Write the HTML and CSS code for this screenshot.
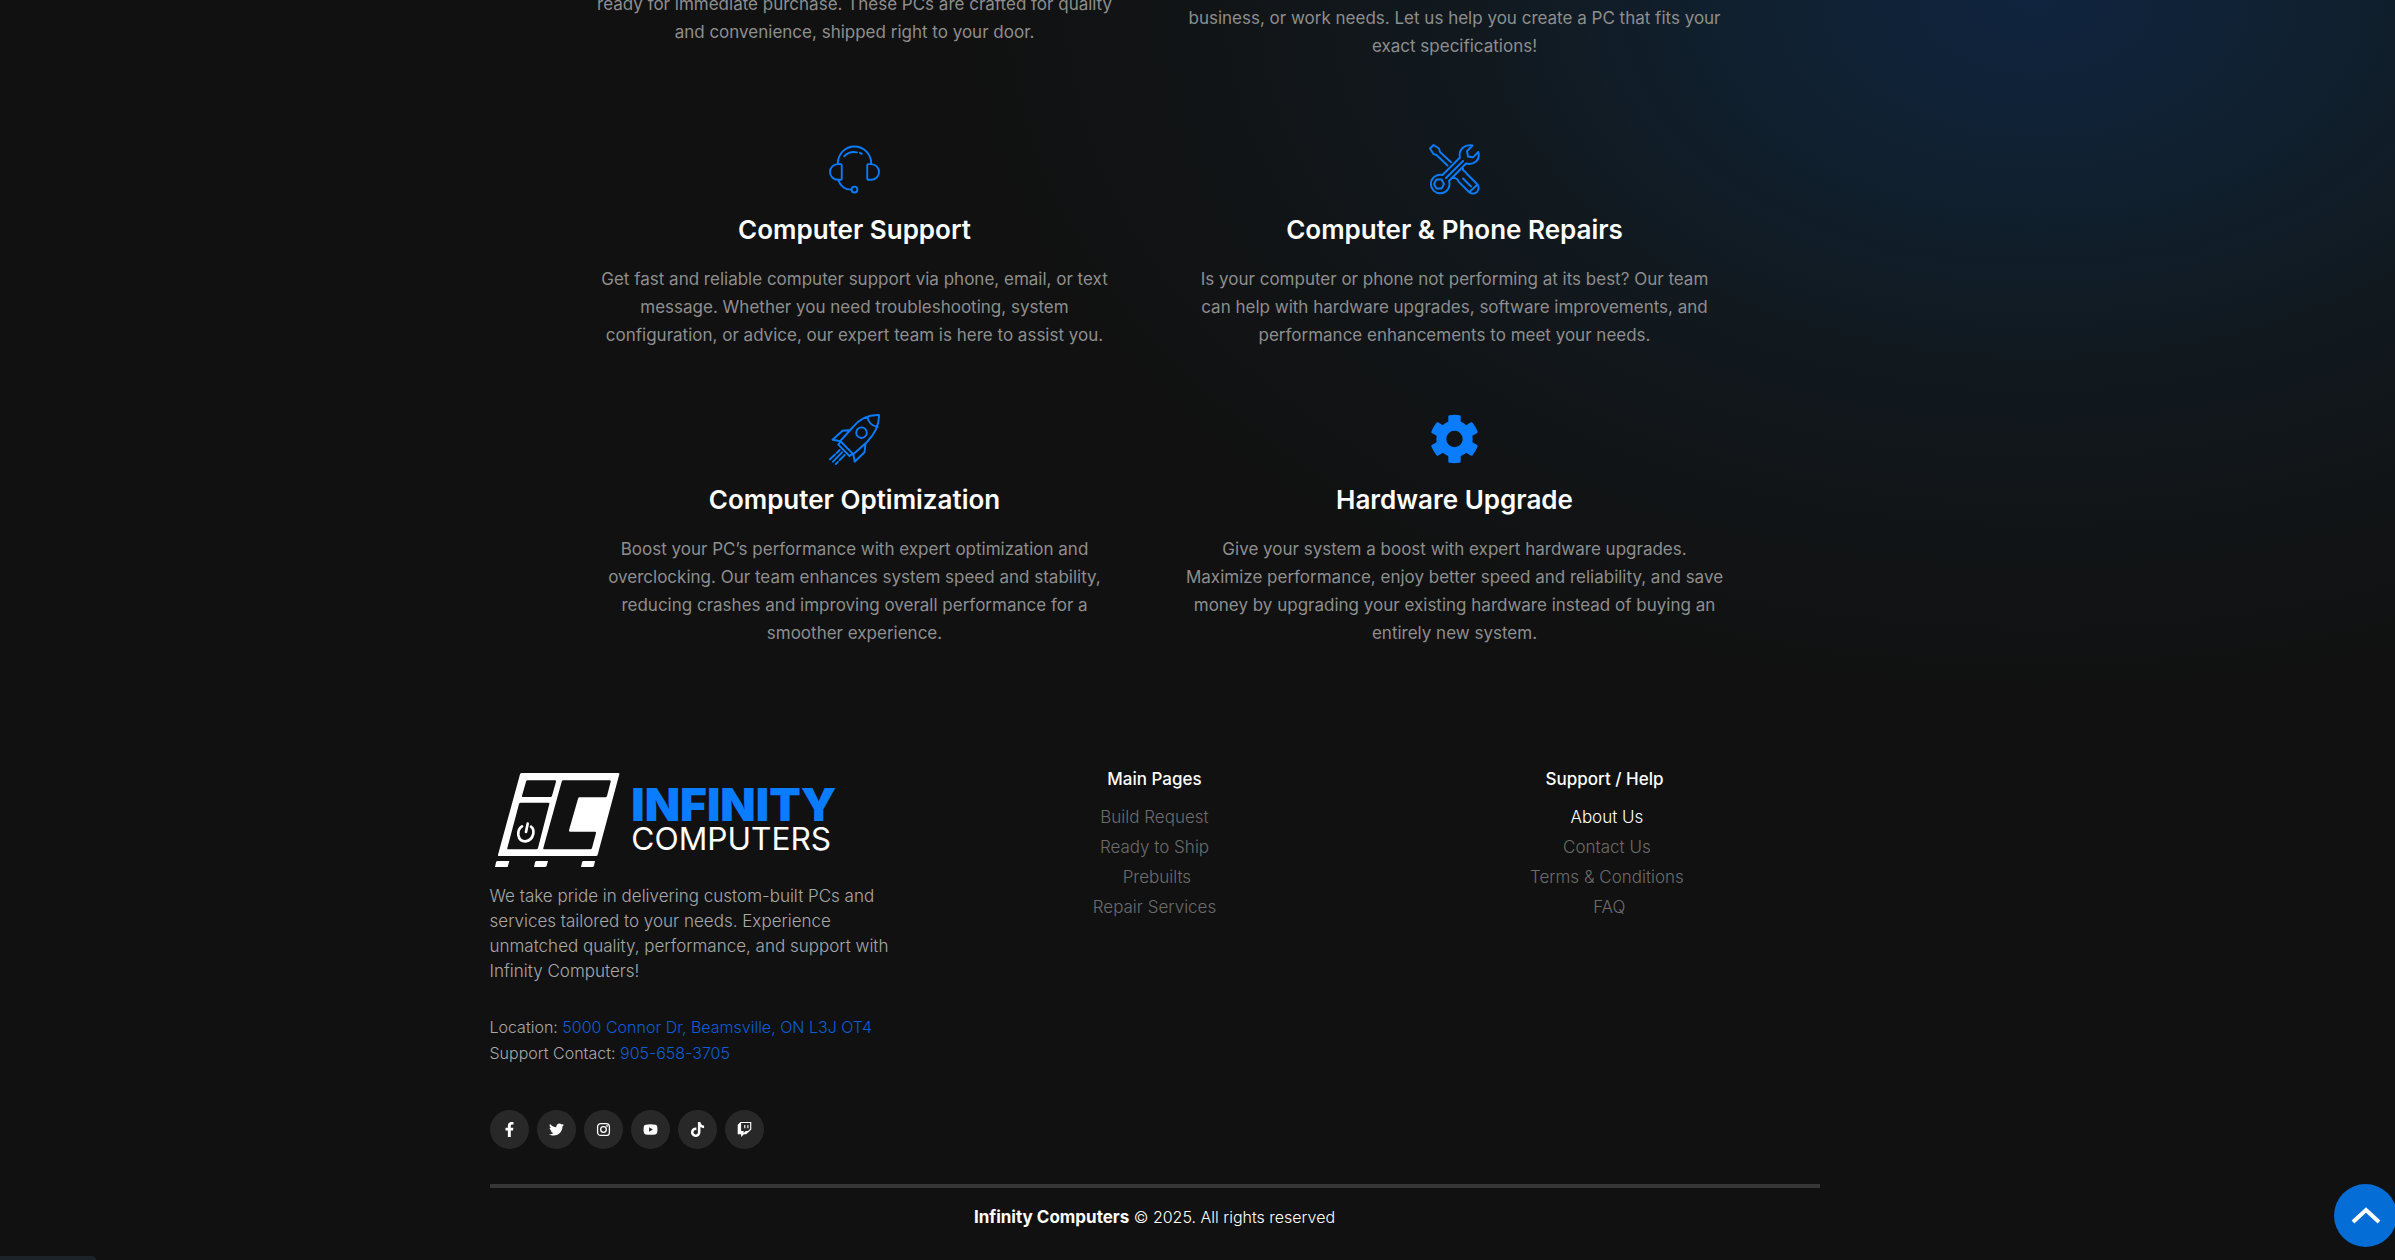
FILE: index.html
```html
<!DOCTYPE html>
<html lang="en">
<head>
<meta charset="utf-8">
<meta name="viewport" content="width=device-width, initial-scale=1">
<title>Infinity Computers</title>
<link rel="stylesheet" href="styles.css">
</head>
<body>
<main class="services">
  <div class="intro-row">
    <p class="text text-raised">ready for immediate purchase. These PCs are crafted for quality<br>and convenience, shipped right to your door.</p>
    <p class="text">business, or work needs. Let us help you create a PC that fits your<br>exact specifications!</p>
  </div>
  <div class="grid">
    <article class="card">
      <svg class="icon" viewBox="0 0 52 51" aria-hidden="true"><path d="M9 20v-1a17 17 0 0 1 34 0v1M15.500 12q5-5.500 13-4M31.500 8.500l2 1M13 21v14q0 1-1 1H9a8 8 0 0 1 0-16h3q1 0 1 1zM39 21v14q0 1 1 1h3a8 8 0 0 0 0-16h-3q-1 0-1 1zM9.500 36.500Q13.500 46 22.500 46"/><ellipse cx="26" cy="46" rx="3" ry="3"/></svg>
      <h3 class="title">Computer Support</h3>
      <p class="text">Get fast and reliable computer support via phone, email, or text<br>message. Whether you need troubleshooting, system<br>configuration, or advice, our expert team is here to assist you.</p>
    </article>
    <article class="card">
      <svg class="icon" viewBox="0 0 51 51" aria-hidden="true"><path d="M18.500 21.500 7.500 11 4.500 10 1 4.500 4.500 1 10 4.500 11 8 22 18.300M13.500 31 31 13.500Q29.500 8 33.500 4 38 .2 43.500 1.500L38 7l1 5.500 5 .8 5.300-5.300Q51 14 47 17.500 43 21 37 19.500L20 37A9.300 9.300 0 1 1 13.500 31zM17 34 34 17M34 22.500v3.500l2.500 2L37.500 29.500 48.500 40.500Q51 44 48 48 44 51 40.500 48.500L29.600 37.700 28.500 35.500 26 34H22.500M34 34.500l8 8M41 47.500l7.500-7M7.500 35.500h5L15 40l-2.500 4.500h-5L5 40z"/></svg>
      <h3 class="title">Computer &amp; Phone Repairs</h3>
      <p class="text">Is your computer or phone not performing at its best? Our team<br>can help with hardware upgrades, software improvements, and<br>performance enhancements to meet your needs.</p>
    </article>
    <article class="card">
      <svg class="icon" viewBox="0 0 51 51" aria-hidden="true"><path d="M10.700 27.700 24 13Q34 .5 50 1 50.500 15 38 28L24.300 40.300M38.500 3Q39.500 11 48.500 13M21.500 16l-8 .8L3.600 25.700l8 1.600M36.500 30 35.500 38.300 25.700 47.700 24.300 40.300 11.800 27.500 9.300 30.700 20.500 42l3.500-2.500M10.700 36l-3 3M6 40.500 1 45.300M13 38.300 4 47.700M15.700 41l-5 5M9 47.800 6.800 50"/><circle cx="32.500" cy="18.700" r="5.300"/></svg>
      <h3 class="title">Computer Optimization</h3>
      <p class="text">Boost your PC’s performance with expert optimization and<br>overclocking. Our team enhances system speed and stability,<br>reducing crashes and improving overall performance for a<br>smoother experience.</p>
    </article>
    <article class="card">
      <svg class="icon icon-gear" viewBox="-25.500 -25 51 51" aria-hidden="true"><circle r="13.200"/><g><path id="tooth" d="M-6.200-14V-22.700Q-6-23.700-5-23.800Q0-24.500 5-23.800Q6-23.700 6.200-22.700V-14z"/><use href="#tooth" transform="rotate(60)"/><use href="#tooth" transform="rotate(120)"/><use href="#tooth" transform="rotate(180)"/><use href="#tooth" transform="rotate(240)"/><use href="#tooth" transform="rotate(300)"/></g></svg>
      <h3 class="title">Hardware Upgrade</h3>
      <p class="text">Give your system a boost with expert hardware upgrades.<br>Maximize performance, enjoy better speed and reliability, and save<br>money by upgrading your existing hardware instead of buying an<br>entirely new system.</p>
    </article>
  </div>
</main>

<footer class="footer">
  <div class="footer-cols">
    <section>
      <svg class="logo" viewBox="30 18 1065 318" role="img" aria-label="Infinity Computers">
        <path fill="#fff" fill-rule="evenodd" d="M126 39H415Q419 39 418 43L353 284Q352 288 348 288H57Q53 288 54 284L120 43Q121 39 126 39zM143 61Q139 61 138 65L126 107Q125 111 129 111H212Q215 111 216 107L228 65Q229 61 225 61zM122 128Q118 128 117 132L82 264Q81 268 85 268H169Q173 268 174 264L208 132Q209 128 205 128zM250 61Q246 61 245 65L190 264Q189 268 193 268H331Q335 268 336 264L348 219Q349 215 345 215H271Q266 215 267 211L294 116Q295 112 299 112H376Q380 112 381 108L392 65Q393 61 389 61zM53 303H88L83 321H45L48 307Q49 303 53 303zM170 303H204L200 317Q199 321 195 321H162L165 307Q166 303 170 303zM311 303H345L342 317Q341 321 337 321H303L306 307Q307 303 311 303z"/>
        <path fill="none" stroke="#fff" stroke-width="8" stroke-linecap="round" d="M126 199Q113 207 115 225Q118 244 136 244Q155 243 160 221Q162 206 153 200M143 191L138 216"/>
        <text class="logo-top" x="454" y="184">INFINITY</text>
        <text class="logo-bottom" x="454" y="270">COMPUTERS</text>
      </svg>
      <p class="about">We take pride in delivering custom-built PCs and<br>services tailored to your needs. Experience<br>unmatched quality, performance, and support with<br>Infinity Computers!</p>
      <address class="contact">Location: <a href="#location">5000 Connor Dr, Beamsville, ON L3J OT4</a><br>Support Contact: <a href="tel:905-658-3705">905-658-3705</a></address>
      <nav class="social" aria-label="Social media">
        <a href="#facebook" aria-label="Facebook"><svg viewBox="0 0 320 512"><path d="M279.140 288l14.220-92.660h-88.910v-60.130c0-25.350 12.420-50.060 52.240-50.060h40.420V6.260S260.430 0 225.360 0c-73.220 0-121.080 44.380-121.080 124.720v70.620H22.890V288h81.390v224h100.170V288z"/></svg></a>
        <a href="#twitter" aria-label="Twitter"><svg viewBox="0 0 512 512"><path d="M459.370 151.716c.325 4.548.325 9.097.325 13.645 0 138.720-105.583 298.558-298.558 298.558-59.452 0-114.680-17.219-161.137-47.106 8.447.974 16.568 1.299 25.340 1.299 49.055 0 94.213-16.568 130.274-44.832-46.132-.975-84.792-31.188-98.112-72.772 6.498.974 12.995 1.624 19.818 1.624 9.421 0 18.843-1.300 27.614-3.573-48.081-9.747-84.143-51.980-84.143-102.985v-1.299c13.969 7.797 30.214 12.670 47.431 13.319-28.264-18.843-46.781-51.005-46.781-87.391 0-19.492 5.197-37.360 14.294-52.954 51.655 63.675 129.300 105.258 216.365 109.807-1.624-7.797-2.599-15.918-2.599-24.040 0-57.828 46.782-104.934 104.934-104.934 30.213 0 57.502 12.670 76.670 33.137 23.715-4.548 46.456-13.320 66.599-25.340-7.798 24.366-24.366 44.833-46.132 57.827 21.117-2.273 41.584-8.122 60.426-16.243-14.292 20.791-32.161 39.308-52.628 54.253z"/></svg></a>
        <a href="#instagram" aria-label="Instagram"><svg viewBox="0 0 16 16"><rect x="1.700" y="1.700" width="12.600" height="12.600" rx="3.500" fill="none" stroke="#fff" stroke-width="1.400"/><circle cx="8" cy="8" r="3" fill="none" stroke="#fff" stroke-width="1.400"/><circle cx="11.800" cy="4.200" r=".9"/></svg></a>
        <a href="#youtube" aria-label="YouTube"><svg viewBox="0 0 16 16"><path fill-rule="evenodd" d="M3 2.800Q8 2.200 13 2.800 14.900 3 15.200 5 15.600 8 15.200 11 14.900 13 13 13.200 8 13.800 3 13.200 1.100 13 .8 11 .4 8 .8 5 1.100 3 3 2.800zM6.500 5.700v4.600L10.500 8z"/></svg></a>
        <a href="#tiktok" aria-label="TikTok"><svg viewBox="0 0 448 512"><path d="M448 209.910a210.060 210.060 0 0 1-122.770-39.250V349.380A162.550 162.550 0 1 1 185 188.310V278.200a74.620 74.620 0 1 0 52.230 71.180V0h88a121.180 121.180 0 0 0 1.860 22.170A122.180 122.180 0 0 0 381 102.390a121.430 121.430 0 0 0 67 20.140z"/></svg></a>
        <a href="#twitch" aria-label="Twitch"><svg viewBox="0 0 512 512"><path d="M391.170 103.470H352.540v109.700h38.630ZM285 103H246.370V212.750H285ZM120.830 0 24.310 91.420V420.580H140.140V512l96.530-91.420h77.250L487.690 256V0ZM449.070 237.750l-77.220 73.120H294.610l-67.600 64v-64H140.140V36.580H449.070Z"/></svg></a>
      </nav>
    </section>
    <nav class="links" aria-labelledby="main-pages">
      <h4 id="main-pages">Main Pages</h4>
      <ul>
        <li><a href="#build">Build Request</a></li>
        <li><a href="#ready">Ready to Ship</a></li>
        <li>&nbsp;<a href="#prebuilts">Prebuilts</a></li>
        <li><a href="#repair">Repair Services</a></li>
      </ul>
    </nav>
    <nav class="links" aria-labelledby="support">
      <h4 id="support">Support / Help</h4>
      <ul>
        <li>&nbsp;<a class="active" href="#about">About Us</a></li>
        <li>&nbsp;<a href="#contact">Contact Us</a></li>
        <li>&nbsp;<a href="#terms">Terms &amp; Conditions</a></li>
        <li>&nbsp;&nbsp;<a href="#faq">FAQ</a></li>
      </ul>
    </nav>
  </div>
  <hr class="rule">
  <p class="copyright"><strong>Infinity Computers</strong> © 2025. All rights reserved</p>
</footer>
<button class="to-top" type="button" aria-label="Back to top"><svg viewBox="0 0 30 20" aria-hidden="true"><path d="M2 16 15 4 28 16"/></svg></button>
<div class="status-bubble"></div>
</body>
</html>
```
FILE: styles.css
```css
* { box-sizing: border-box; }

body {
  margin: 0;
  padding-right: 86px;
  min-height: 100vh;
  overflow: hidden;
  background: radial-gradient(ellipse 1080px 700px at 85% 0, #10243f 0%, #10202f 28%, #11191f 52%, #111416 78%, #111 100%) #111;
  font-family: Inter, "Noto Sans", sans-serif;
  font-size: 17px;
  color: #fff;
}

h3, h4, p, ul { margin: 0; }
a { text-decoration: none; }

.services {
  max-width: 1200px;
  margin: 0 auto;
}

.intro-row {
  display: grid;
  grid-template-columns: 1fr 1fr;
  grid-template-rows: 60px;
  align-items: end;
  margin-bottom: 84px;
}

.grid {
  display: grid;
  grid-template-columns: 1fr 1fr;
  row-gap: 65px;
}

.card {
  display: flex;
  flex-direction: column;
  align-items: center;
  gap: 20px;
}

.text {
  color: #8e8e8e;
  line-height: 28px;
  text-align: center;
}

.text-raised { padding-bottom: 14px; }

.title {
  font-size: 26px;
  line-height: 30px;
  font-weight: 600;
}

.icon {
  width: 51px;
  height: 51px;
  fill: none;
  stroke: #0a7cff;
  stroke-width: 1.9;
  stroke-linejoin: round;
  stroke-linecap: round;
}

.icon-gear circle { stroke-width: 10; }
.icon-gear g { fill: #0a7cff; stroke: none; }

.footer {
  max-width: 1330px;
  margin: 119px auto 0;
}

.footer-cols {
  display: grid;
  grid-template-columns: repeat(3, 1fr);
  column-gap: 20px;
}

.logo {
  display: block;
  width: 355px;
  height: 106px;
  margin-bottom: 12px;
}

.logo-top {
  font-size: 138px;
  font-weight: 900;
  fill: #0a7cff;
}

.logo-bottom {
  font-size: 95px;
  font-weight: 400;
  fill: #fff;
}

.about,
.contact {
  color: #a8a8a8;
  font-style: normal;
  font-weight: 300;
  white-space: nowrap;
}

.about { line-height: 25px; }

.contact {
  margin-top: 30px;
  font-size: 16px;
  line-height: 26px;
}

.contact a { color: #0b5ed7; }

.social {
  display: flex;
  gap: 8px;
  margin-top: 44px;
}

.social a {
  display: grid;
  place-items: center;
  width: 39px;
  height: 39px;
  border-radius: 50%;
  background: #282828;
}

.social svg {
  width: 15px;
  height: 15px;
  fill: #fff;
}

.links { text-align: center; }

.links h4 {
  margin-bottom: 10px;
  font-size: 17px;
  line-height: 26px;
  font-weight: 500;
}

.links ul {
  padding: 0;
  list-style: none;
  line-height: 30px;
  font-weight: 300;
}

.links a { color: #6c6c6c; }
.links .active { color: #fff; }

.rule {
  height: 4px;
  margin: 35px 0 16px;
  border: 0;
  background: #363636;
}

.copyright {
  font-size: 16px;
  line-height: 26px;
  font-weight: 300;
  text-align: center;
}

.copyright strong {
  font-size: 17px;
  font-weight: 700;
}

.to-top {
  position: fixed;
  right: -2px;
  bottom: 13px;
  display: grid;
  place-items: center;
  width: 63px;
  height: 63px;
  padding: 0;
  border: 0;
  border-radius: 50%;
  background: #056dd6;
}

.to-top svg {
  width: 30px;
  height: 20px;
  fill: none;
  stroke: #fff;
  stroke-width: 4;
}

.status-bubble {
  position: fixed;
  left: 0;
  bottom: 0;
  width: 96px;
  height: 4px;
  border-top-right-radius: 4px;
  background: #1c2329;
}
```
